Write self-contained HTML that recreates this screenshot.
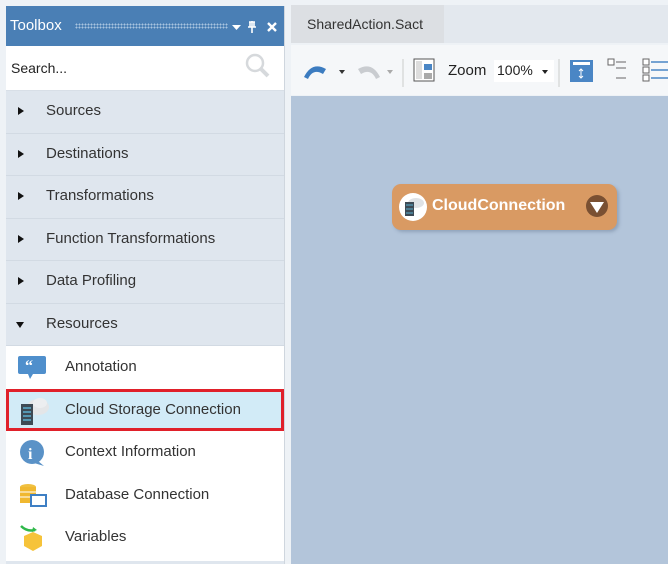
<!DOCTYPE html>
<html><head><style>
*{margin:0;padding:0;box-sizing:border-box}
body{width:668px;height:564px;background:#eef2f6;font-family:"Liberation Sans",sans-serif;position:relative;overflow:hidden;color:#333}
.panel{position:absolute;left:6px;top:6px;width:279px;height:558px;background:#dfe6ee;border-right:1px solid #cfd6de}
.hdr{height:40px;background:#4a7fb5;color:#fff;font-size:15px;line-height:40px;padding-left:4px;position:relative}
.dots{position:absolute;left:69px;top:17px;width:153px;height:6px;background-image:radial-gradient(circle,#a9c4e0 0.8px,transparent 1px);background-size:3px 3px}
.search{height:45px;background:#fff;font-size:14px;line-height:45px;padding-left:5px;color:#222;position:relative;border-bottom:1px solid #d8dfe7}
.cat{height:42.5px;border-bottom:1px solid #d2dae3;font-size:15px;line-height:40px;padding-left:40px;position:relative;color:#333}
.cat:before{content:"";position:absolute;left:12px;top:16px;border-left:6px solid #111;border-top:4px solid transparent;border-bottom:4px solid transparent}
.cat.open:before{left:10px;top:18px;border-top:6px solid #111;border-left:4px solid transparent;border-right:4px solid transparent;border-bottom:0}
.items{background:#fff;height:215px}
.it{height:42.5px;font-size:15px;line-height:41px;padding-left:59px;position:relative}
.it svg{position:absolute;left:12px;top:8px}
.sel{background:#d2ebf7;outline:3px solid #e0202a;outline-offset:-3px}
.tab{position:absolute;left:291px;top:5px;width:153px;height:38px;background:#dcdfe3;font-size:14px;line-height:38px;padding-left:16px;color:#333}
.tabbar{position:absolute;left:291px;top:5px;width:377px;height:38px;background:#e3e8ee}
.tb{position:absolute;left:291px;top:45px;width:377px;height:50px;background:#f5f7f9}
.canvas{position:absolute;left:291px;top:96px;width:377px;height:468px;background:#b3c5da}
.node{position:absolute;left:392px;top:184px;width:225px;height:46px;background:#d99a63;border-radius:9px;box-shadow:2px 2px 3px rgba(80,100,130,.35);color:#fff;font-weight:bold;font-size:16px;line-height:44px;padding-left:40px}
</style></head><body>
<div class="panel">
 <div class="hdr">Toolbox<div class="dots"></div>
  <svg style="position:absolute;left:226px;top:14px" width="48" height="14"><path d="M0 5h9l-4.5 5z" fill="#fff"/><path d="M20 1v8M17 2h6M18 2v5h4V2M16 7h8M20 9v4" stroke="#fff" stroke-width="1.6" fill="none"/><path d="M36 3l8 8M44 3l-8 8" stroke="#fff" stroke-width="2.4"/></svg>
 </div>
 <div class="search">Search...<svg style="position:absolute;left:238px;top:6px" width="28" height="28"><circle cx="11" cy="11" r="8" fill="none" stroke="#d6d9dc" stroke-width="2.5"/><path d="M17 17l7 7" stroke="#d6d9dc" stroke-width="4"/></svg></div>
 <div class="cat">Sources</div>
 <div class="cat">Destinations</div>
 <div class="cat">Transformations</div>
 <div class="cat">Function Transformations</div>
 <div class="cat">Data Profiling</div>
 <div class="cat open">Resources</div>
 <div class="items">
  <div class="it">Annotation<svg width="30" height="26"><rect x="0" y="2" width="28" height="18" rx="2" fill="#4f8fcc"/><path d="M10 20l2 5 3-5z" fill="#4f8fcc"/><text x="7" y="17" fill="#fff" font-size="16" font-weight="bold" font-family="Liberation Serif">“</text></svg></div>
  <div class="it sel">Cloud Storage Connection<svg width="34" height="28"><ellipse cx="20" cy="10" rx="11" ry="8" fill="#e4e6e8"/><ellipse cx="22" cy="6" rx="7" ry="5" fill="#eceef0"/><rect x="3" y="7" width="12" height="21" fill="#3d4a55"/><path d="M5 11h8M5 15h8M5 19h8M5 23h8" stroke="#5cb0d0" stroke-width="1.5"/></svg></div>
  <div class="it">Context Information<svg width="30" height="30"><circle cx="14" cy="13" r="12" fill="#5a92c7"/><path d="M20 22l6 5-10-3z" fill="#5a92c7"/><text x="10" y="20" fill="#fff" font-size="16" font-weight="bold" font-family="Liberation Serif">i</text></svg></div>
  <div class="it">Database Connection<svg width="32" height="30"><ellipse cx="10" cy="5" rx="8" ry="3" fill="#f0c040"/><rect x="2" y="5" width="16" height="16" fill="#f0b830"/><path d="M2 10h16M2 15h16" stroke="#fff"/><rect x="13" y="13" width="15" height="11" fill="#fff" stroke="#3e7fc4" stroke-width="2"/></svg></div>
  <div class="it">Variables<svg width="30" height="30"><path d="M3 2q6 6 14 4" stroke="#2fb84a" stroke-width="2.5" fill="none"/><path d="M15 3l4 3-5 2z" fill="#2fb84a"/><path d="M15 8l9 4v10l-9 5-9-5V12z" fill="#f6c33a"/></svg></div>
 </div>
</div>
<div class="tabbar"></div>
<div class="tab">SharedAction.Sact</div>
<div class="tb">
 <svg width="377" height="50"><path d="M13 32q8-16 22-8l-3 5q-10-6-15 5z" fill="#3c7cc0"/><path d="M48 25h6l-3 4z" fill="#333"/><path d="M89 32q-8-16-22-8l3 5q10-6 15 5z" fill="#c9ccd0"/><path d="M96 25h6l-3 4z" fill="#aaa"/><path d="M112 14v28" stroke="#ccc"/><rect x="123" y="14" width="20" height="22" fill="#fff" stroke="#555"/><rect x="125" y="16" width="6" height="18" fill="#ddd"/><rect x="133" y="19" width="8" height="6" fill="#4a86c5"/><rect x="133" y="28" width="8" height="6" fill="#aaa"/><text x="157" y="30" font-size="15" fill="#222" font-family="Liberation Sans">Zoom</text><rect x="203" y="15" width="60" height="22" fill="#fff"/><text x="206" y="30" font-size="14" fill="#222" font-family="Liberation Sans">100%</text><path d="M251 25h6l-3 4z" fill="#222"/><path d="M268 14v28" stroke="#ccc"/><rect x="279" y="15" width="23" height="22" fill="#4a86c5"/><rect x="282" y="17" width="17" height="3" fill="#fff"/><path d="M290 24v9M288 26l2-2 2 2M288 31l2 2 2-2" stroke="#fff" fill="none"/><rect x="317" y="14" width="6" height="6" fill="#fff" stroke="#666"/><path d="M325 17h10M325 23h10M325 33h10" stroke="#666"/><rect x="352" y="14" width="6" height="6" fill="#fff" stroke="#666"/><rect x="352" y="22" width="6" height="6" fill="#fff" stroke="#666"/><rect x="352" y="30" width="6" height="6" fill="#fff" stroke="#666"/><path d="M360 17h17M360 25h17M360 33h17" stroke="#4a86c5" stroke-width="1.5"/></svg>
</div>
<div class="canvas"></div>
<div class="node">CloudConnection
 <svg style="position:absolute;left:6px;top:8px" width="30" height="30"><circle cx="15" cy="15" r="14" fill="#fff"/><ellipse cx="18" cy="11" rx="8" ry="5" fill="#dfe2e5"/><rect x="7" y="10" width="9" height="14" fill="#3d4a55"/><path d="M8 13h7M8 17h7M8 21h7" stroke="#5cb0d0"/></svg>
 <svg style="position:absolute;left:193px;top:10px" width="24" height="24"><circle cx="12" cy="12" r="11" fill="#7a5032"/><path d="M5 8h14l-7 11z" fill="#fff"/></svg>
</div>
</body></html>
